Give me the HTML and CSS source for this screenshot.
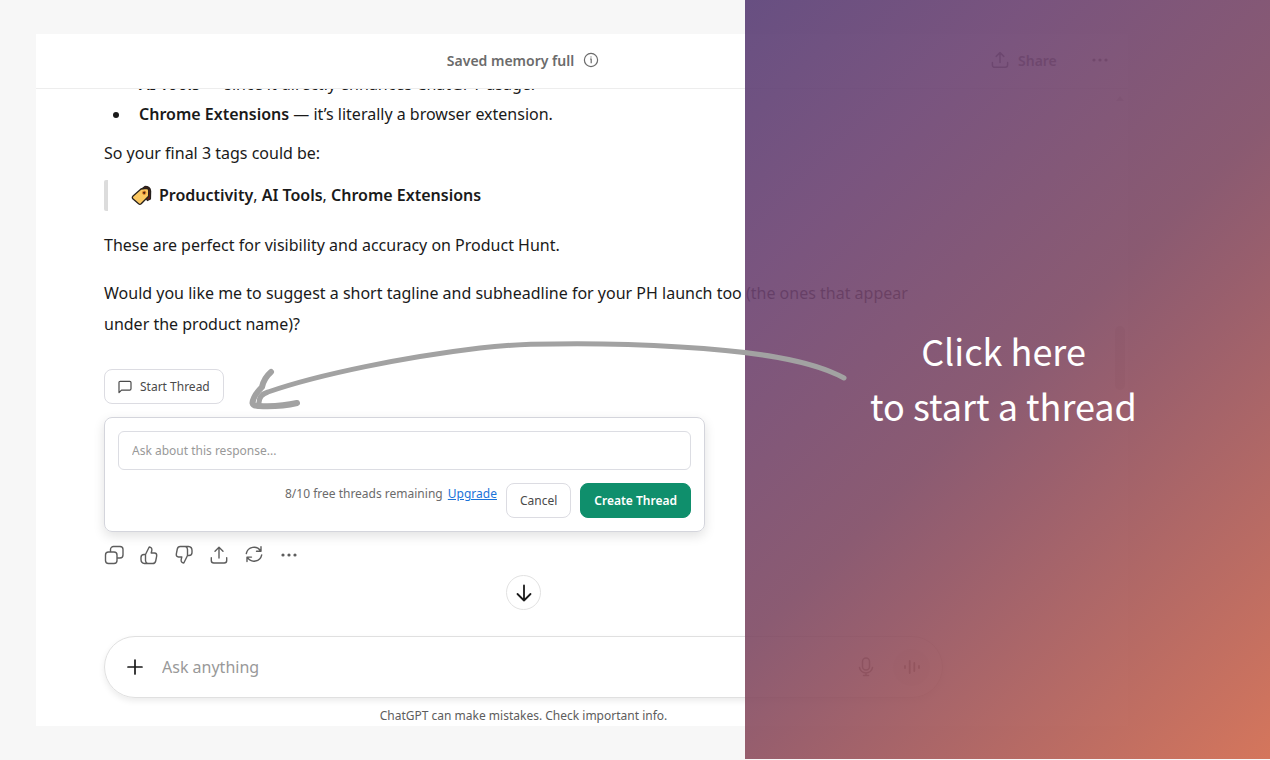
FILE: index.html
```
<!DOCTYPE html>
<html lang="en">
<head>
    <meta charset="UTF-8">
    <meta name="viewport" content="width=device-width, initial-scale=1.0">
    <title>Start a thread</title>
    <link rel="stylesheet" href="styles.css">
</head>
<body>
    <div class="window">
        <header class="topbar">
            <div class="memory">
                <span>Saved memory full</span>
                <svg width="16" height="16" viewBox="0 0 16 16" fill="none" stroke="currentColor" stroke-width="1.2">
                    <circle cx="8" cy="8" r="6.6"></circle>
                    <path d="M7 7h1.2v4.2M8 4.4v1.2"></path>
                </svg>
            </div>
            <button type="button" class="share">
                <svg width="18" height="18" viewBox="0 0 18 18" fill="none" stroke="currentColor" stroke-width="1.5" stroke-linecap="round" stroke-linejoin="round">
                    <path d="M9 11.5V1.8M5.2 5.4L9 1.6l3.8 3.8M1.4 11.5v2.6a2.2 2.2 0 0 0 2.2 2.2h10.800a2.200 2.200 0 0 0 2.200-2.200v-2.600"></path>
                </svg>
                <span>Share</span>
            </button>
            <button type="button" class="icon-button" aria-label="More options">
                <svg width="18" height="18" viewBox="0 0 18 18" fill="currentColor">
                    <circle cx="3" cy="9" r="1.6"></circle><circle cx="9" cy="9" r="1.6"></circle><circle cx="15" cy="9" r="1.6"></circle>
                </svg>
            </button>
        </header>

        <main class="chat">
            <article class="message">
                <ul>
                    <li><strong>AI Tools</strong> — since it directly enhances ChatGPT usage.</li>
                    <li><strong>Chrome Extensions</strong> — it’s literally a browser extension.</li>
                </ul>
                <p>So your final 3 tags could be:</p>
                <blockquote>
                    <svg width="22" height="22" viewBox="0 0 22 22" stroke="#26201c" stroke-width="1.3" stroke-linejoin="round">
                        <path d="M10 4.500L14 1.500Q19 1.500 19.600 6L19.400 14l-3 1.500z" fill="#6b1d18"></path>
                        <path d="M10 4l5.700-.6q2 .2 2 2.400l-.1 5.400-7.400 7.600q-1.300 1-2.600 0L1.800 13.800q-1-1.300 0-2.500z" fill="#fbc761"></path>
                        <circle cx="13.200" cy="7.800" r="1.700" fill="#4b2413" stroke="#e8872c" stroke-width="1"></circle>
                    </svg>
                    <span><strong>Productivity</strong>, <strong>AI Tools</strong>, <strong>Chrome Extensions</strong></span>
                </blockquote>
                <p>These are perfect for visibility and accuracy on Product Hunt.</p>
                <p>Would you like me to suggest a short tagline and subheadline for your PH launch too (the ones that appear under the product name)?</p>
            </article>

            <button type="button" class="button start-thread">
                <svg width="14" height="14" viewBox="0 0 14 14" fill="none" stroke="currentColor" stroke-width="1.2" stroke-linejoin="round">
                    <path d="M1 12.600V2.600A1.300 1.300 0 0 1 2.300 1.300h9.400A1.300 1.300 0 0 1 13 2.600v6.200a1.300 1.300 0 0 1-1.300 1.300H3.500z"></path>
                </svg>
                <span>Start Thread</span>
            </button>

            <form class="thread-form">
                <input type="text" class="thread-input" placeholder="Ask about this response..." aria-label="Ask about this response">
                <div class="thread-actions">
                    <p class="quota">8/10 free threads remaining <a href="#upgrade">Upgrade</a></p>
                    <button type="button" class="button">Cancel</button>
                    <button type="submit" class="button primary">Create Thread</button>
                </div>
            </form>

            <div class="reactions">
                <button type="button" class="icon-button" aria-label="Copy">
                    <svg width="20" height="20" viewBox="0 0 20 20" fill="none" stroke="currentColor" stroke-width="1.4">
                        <rect x="1.500" y="7" width="11.500" height="11.500" rx="3"></rect>
                        <path d="M6.500 7V4.500a3 3 0 0 1 3-3h6.500a3 3 0 0 1 3 3V10a3 3 0 0 1-3 3h-3"></path>
                    </svg>
                </button>
                <button type="button" class="icon-button" aria-label="Good response">
                    <svg width="20" height="20" viewBox="0 0 20 20" fill="none" stroke="currentColor" stroke-width="1.4" stroke-linejoin="round">
                        <path d="M6.500 9.500L10.200 2q3.200.3 2.600 3.600L12.200 8h3.300q2.500.3 2.200 2.800l-1 5.200q-.5 2.500-3 2.500H5.500Q2 18.200 2 14.500v-2Q2 9.500 5 9.500h1.500v6q.1 2.300 2 3"></path>
                    </svg>
                </button>
                <button type="button" class="icon-button" aria-label="Bad response">
                    <svg width="20" height="20" viewBox="0 0 20 20" fill="none" stroke="currentColor" stroke-width="1.4" stroke-linejoin="round">
                        <path d="M13.500 10.500L9.800 18q-3.200-.3-2.600-3.600L7.800 12H4.500Q2 11.700 2.300 9.200l1-5.200q.5-2.500 3-2.500h8.200Q18 1.800 18 5.500v2q0 3-3 3h-1.500v-6q-.1-2.300-2-3"></path>
                    </svg>
                </button>
                <button type="button" class="icon-button" aria-label="Share response">
                    <svg width="20" height="20" viewBox="0 0 20 20" fill="none" stroke="currentColor" stroke-width="1.4" stroke-linecap="round" stroke-linejoin="round">
                        <path d="M10 13V2.500M6 6.300l4-4 4 4M2.300 12.800v2.700a2.500 2.500 0 0 0 2.500 2.500h10.400a2.500 2.500 0 0 0 2.500-2.500v-2.700"></path>
                    </svg>
                </button>
                <button type="button" class="icon-button" aria-label="Try again">
                    <svg width="20" height="20" viewBox="0 0 20 20" fill="none" stroke="currentColor" stroke-width="1.4" stroke-linecap="round" stroke-linejoin="round">
                        <path d="M2.300 8.500A7.800 7.800 0 0 1 16.600 6M17 1.800V6.300h-4.500M17.700 9.900A7.800 7.800 0 0 1 3.400 12.400M3 16.600v-4.500h4.500"></path>
                    </svg>
                </button>
                <button type="button" class="icon-button" aria-label="More actions">
                    <svg width="20" height="20" viewBox="0 0 20 20" fill="currentColor">
                        <circle cx="4" cy="10" r="1.600"></circle><circle cx="10" cy="10" r="1.600"></circle><circle cx="16" cy="10" r="1.600"></circle>
                    </svg>
                </button>
            </div>

            <button type="button" class="scroll-down" aria-label="Scroll to bottom">
                <svg width="20" height="20" viewBox="0 0 20 20" fill="none" stroke="currentColor" stroke-width="1.800" stroke-linecap="round" stroke-linejoin="round">
                    <path d="M10 2.500v15M3.500 11l6.500 6.500 6.500-6.500"></path>
                </svg>
            </button>

            <div class="scrollbar">
                <svg width="8" height="5" viewBox="0 0 8 5" fill="currentColor"><path d="M4 0l4 5H0z"></path></svg>
                <div class="thumb"></div>
            </div>
        </main>

        <footer class="footer">
            <div class="composer">
                <button type="button" class="icon-button" aria-label="Add files">
                    <svg width="18" height="18" viewBox="0 0 18 18" stroke="currentColor" stroke-width="1.700" stroke-linecap="round">
                        <path d="M9 2v14M2 9h14"></path>
                    </svg>
                </button>
                <input type="text" class="composer-input" placeholder="Ask anything" aria-label="Ask anything">
                <button type="button" class="icon-button mic" aria-label="Dictate">
                    <svg width="18" height="20" viewBox="0 0 18 20" fill="none" stroke="currentColor" stroke-width="1.500" stroke-linecap="round">
                        <rect x="5.500" y="1" width="7" height="12" rx="3.500"></rect>
                        <path d="M2.500 10.500a6.600 6.600 0 0 0 13 0M9 16v2.500M6.500 18.600h5"></path>
                    </svg>
                </button>
                <button type="button" class="voice" aria-label="Voice mode">
                    <svg width="18" height="18" viewBox="0 0 18 18" stroke="currentColor" stroke-width="1.800" stroke-linecap="round">
                        <path d="M2 8v2M6.700 3v12M11.300 5v8M16 8v2"></path>
                    </svg>
                </button>
            </div>
            <p class="disclaimer">ChatGPT can make mistakes. Check important info.</p>
        </footer>
    </div>

    <aside class="callout">
        <p>Click here<br>to start a thread</p>
    </aside>

    <svg class="arrow" width="610" height="80" viewBox="0 0 610 80" fill="none" stroke="#a2a2a2" stroke-linecap="round" stroke-linejoin="round">
        <path stroke-width="5" d="M604 39C570 20 510 12 440 8C390 5 350 4.500 315 5C290 5 265 6 240 9C165 18 80 35 28 53Q18 56 19 66"></path>
        <path stroke-width="6" d="M31 33Q24 39 22 48Q13 57 12.500 64Q13 67 19 67"></path>
        <path stroke-width="6" d="M19 67Q40 68 57 64"></path>
    </svg>
</body>
</html>
```
FILE: styles.css
```
* {
    margin: 0;
    padding: 0;
    box-sizing: border-box;
}

body {
    position: relative;
    height: 100vh;
    padding: 34px 142px 34px 36px;
    overflow: hidden;
    background-color: #f7f7f7;
    color: #1a1a1a;
    font-family: "Noto Sans", sans-serif;
    font-size: 16px;
}

button,
input {
    font-family: inherit;
    color: inherit;
}

svg {
    display: block;
    flex-shrink: 0;
}

.window {
    display: flex;
    flex-direction: column;
    height: 100%;
    background-color: #fff;
}

/* Top bar */
.topbar {
    display: flex;
    align-items: center;
    flex-shrink: 0;
    height: 55px;
    padding: 0 18px 2px 68px;
    border-bottom: 1px solid #ededed;
    color: #6b6b6b;
    font-size: 14px;
    font-weight: 600;
}

.memory {
    display: flex;
    flex: 0 1 838px;
    align-items: center;
    justify-content: center;
    gap: 9px;
}

.share {
    display: flex;
    align-items: center;
    gap: 9px;
    margin: 0 34px 0 49px;
    border: none;
    background: none;
    font-size: 14px;
    font-weight: 600;
}

.icon-button {
    border: none;
    background: none;
    cursor: pointer;
}

/* Conversation */
.chat {
    position: relative;
    display: flex;
    flex: 1;
    flex-direction: column;
    justify-content: flex-end;
    align-items: flex-start;
    min-height: 0;
    padding: 0 185px 0 68px;
    overflow: hidden;
}

.message {
    margin-bottom: 29px;
    line-height: 31px;
}

.message ul {
    padding-left: 27px;
    line-height: 30px;
}

.message li {
    padding-left: 8px;
}

.message p {
    margin-top: 17px;
}

.message ul + p {
    margin-top: 9px;
}

.message strong {
    font-weight: 600;
}

blockquote {
    display: flex;
    align-items: center;
    gap: 6px;
    margin: 11px 0 19px;
    padding-left: 23px;
    border-left: 4px solid #dcdcdc;
    border-radius: 2px;
}

.button {
    height: 35px;
    padding: 0 13px;
    border: 1px solid #dcdce2;
    border-radius: 8px;
    background-color: #fff;
    color: #4a4a4a;
    font-size: 12px;
    cursor: pointer;
}

.start-thread {
    display: flex;
    flex-shrink: 0;
    align-items: center;
    gap: 8px;
}

.button.primary {
    border-color: #0f8f6c;
    background-color: #0f8f6c;
    color: #fff;
    font-weight: 600;
}

.thread-form {
    width: 100%;
    max-width: 601px;
    margin-top: 13px;
    padding: 13px;
    border: 1px solid #d4d5dc;
    border-radius: 8px;
    box-shadow: 0 4px 12px rgba(0, 0, 0, 0.12);
}

.thread-input {
    width: 100%;
    height: 39px;
    padding: 0 13px;
    border: 1px solid #dcdde3;
    border-radius: 6px;
    font-size: 12px;
}

.thread-input::placeholder,
.composer-input::placeholder {
    color: #999;
}

.thread-actions {
    display: flex;
    justify-content: flex-end;
    gap: 9px;
    margin-top: 13px;
}

.quota {
    color: #6b6b6b;
    font-size: 12px;
    line-height: 22px;
}

.quota a {
    margin-left: 2px;
    color: #1a73d9;
}

.reactions {
    display: flex;
    gap: 15px;
    margin-top: 13px;
    color: #5d5d5d;
}

.scroll-down {
    display: flex;
    flex-shrink: 0;
    align-items: center;
    align-self: center;
    justify-content: center;
    width: 35px;
    height: 35px;
    margin-top: 10px;
    border: 1px solid #e2e2e2;
    border-radius: 50%;
    background-color: #fff;
}

/* Scrollbar over the right edge of the conversation */
.scrollbar {
    position: absolute;
    top: 7px;
    right: 3px;
    bottom: 0;
    display: flex;
    flex-direction: column;
    align-items: center;
    justify-content: space-between;
    width: 10px;
    padding-bottom: 220px;
    color: #d8d8d8;
}

.thumb {
    width: 10px;
    height: 64px;
    border-radius: 5px;
    background-color: #e2e2e2;
}

/* Composer */
.footer {
    flex-shrink: 0;
    padding: 26px 185px 0 68px;
}

.composer {
    display: flex;
    align-items: center;
    gap: 18px;
    height: 62px;
    padding: 0 12px 0 21px;
    border: 1px solid #e0e0e0;
    border-radius: 31px;
    box-shadow: 0 3px 6px rgba(0, 0, 0, 0.08);
}

.composer-input {
    flex: 1;
    min-width: 0;
    border: none;
    background: none;
    font-size: 16px;
    outline: none;
}

.mic {
    color: #777;
}

.voice {
    display: flex;
    align-items: center;
    justify-content: center;
    width: 37px;
    height: 37px;
    border: none;
    border-radius: 50%;
    background-color: #f4f4f4;
    color: #777;
}

.disclaimer {
    padding: 9px 0 1px;
    color: #5d5d5d;
    font-size: 12px;
    line-height: 18px;
    text-align: center;
}

/* Callout laid over the right side of the window */
.callout {
    position: absolute;
    top: 0;
    right: 0;
    bottom: 1px;
    display: flex;
    align-items: center;
    justify-content: center;
    width: 525px;
    padding: 0 8px 4px 0;
    background: linear-gradient(135deg, rgba(88, 61, 117, 0.9), rgba(107, 66, 113, 0.9) 22%, rgba(126, 73, 99, 0.9) 50%, rgba(142, 78, 94, 0.9) 60%, rgba(209, 104, 75, 0.9));
    color: #fff;
    font-family: "Noto Sans CJK SC", sans-serif;
    font-size: 36px;
    line-height: 55px;
    text-align: center;
}

.arrow {
    position: absolute;
    top: 339px;
    left: 240px;
}
```
